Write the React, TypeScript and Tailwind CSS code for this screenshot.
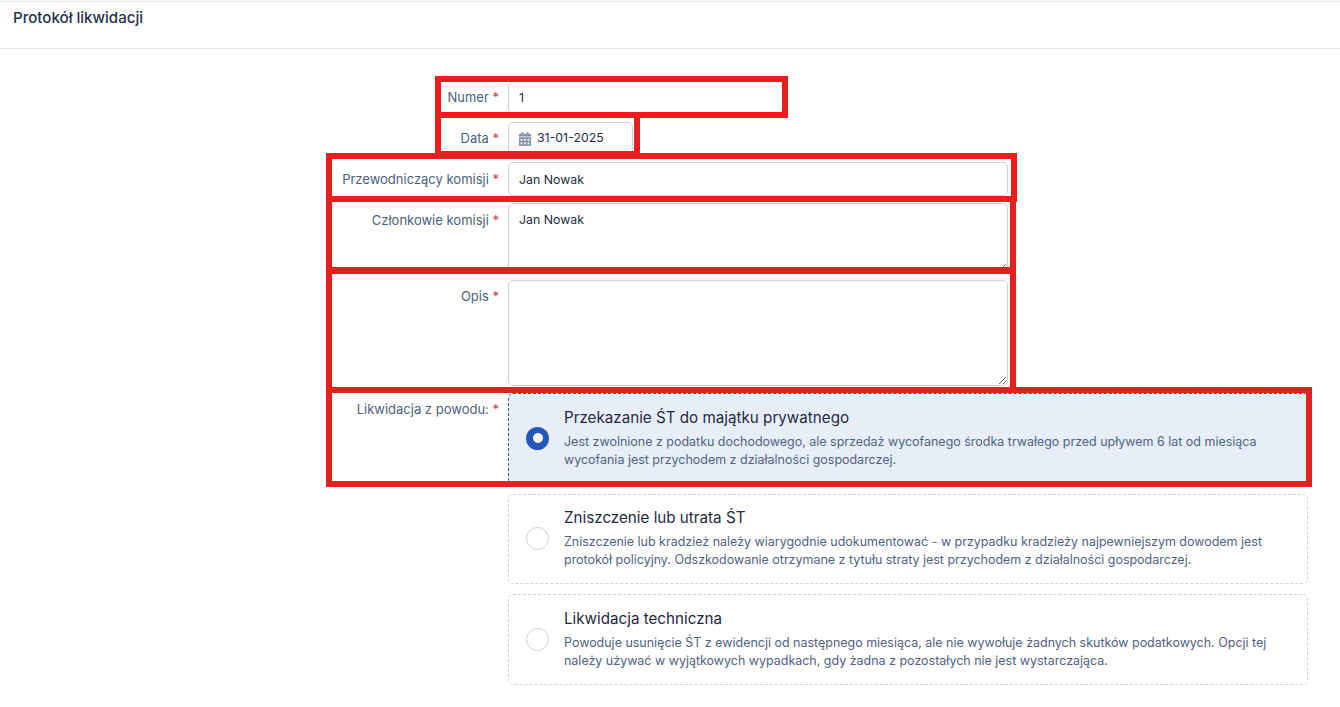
import React from "react";
import { FaCalendarAlt } from "react-icons/fa";

const options = [
  {
    title: "Przekazanie ŚT do majątku prywatnego",
    body: "Jest zwolnione z podatku dochodowego, ale sprzedaż wycofanego środka trwałego przed upływem 6 lat od miesiąca wycofania jest przychodem z działalności gospodarczej.",
    active: true,
  },
  {
    title: "Zniszczenie lub utrata ŚT",
    body: "Zniszczenie lub kradzież należy wiarygodnie udokumentować - w przypadku kradzieży najpewniejszym dowodem jest protokół policyjny. Odszkodowanie otrzymane z tytułu straty jest przychodem z działalności gospodarczej.",
    active: false,
  },
  {
    title: "Likwidacja techniczna",
    body: "Powoduje usunięcie ŚT z ewidencji od następnego miesiąca, ale nie wywołuje żadnych skutków podatkowych. Opcji tej należy używać w wyjątkowych wypadkach, gdy żadna z pozostałych nie jest wystarczająca.",
    active: false,
  },
];

// red annotation frames drawn over the screenshot
const marks = [
  "left-[435px] top-[76px] w-[353px] h-[42px]",
  "left-[435px] top-[112px] w-[205px] h-[45px]",
  "left-[326px] top-[153px] w-[691px] h-[49px]",
  "left-[326px] top-[196px] w-[690px] h-[78px]",
  "left-[326px] top-[267px] w-[690px] h-[126px]",
  "left-[326px] top-[387px] w-[986px] h-[100px]",
];

const Label: React.FC<{ text: string; className?: string }> = ({ text, className }) => (
  <label className={`w-[508px] shrink-0 pr-[9px] text-right text-[13px] leading-[20px] text-[#4a5f7d] ${className ?? ""}`}>
    {text} <span className="text-[#c9403f]">*</span>
  </label>
);

const inputCls =
  "rounded-[5px] border border-[#c8d2de] bg-white px-[10px] text-[12.35px] text-[#1c2b4a] outline-none";

export default function App() {
  return (
    <div className="relative h-[707px] w-[1340px] overflow-hidden bg-white font-['Inter',sans-serif]">
      <header className="mt-px h-[48px] border-y border-[#e6e9f0] pl-[13px] pt-[6px] text-[15.1px] font-medium leading-[20px] text-[#25324b]">
        Protokół likwidacji
      </header>

      <main className="flex flex-col pt-[32px]">
        <div className="mb-[8px] flex items-start">
          <Label text="Numer" className="pt-[6px]" />
          <input readOnly value="1" className={`${inputCls} h-[33px] w-[275px]`} />
        </div>
        <div className="mb-[7px] flex items-start">
          <Label text="Data" className="pt-[6px]" />
          <div className={`${inputCls} flex h-[33px] w-[125px] items-center gap-[5px]`}>
            <FaCalendarAlt className="-ml-px size-[14px] shrink-0 text-[#8996a8]" />
            <span>31-01-2025</span>
          </div>
        </div>
        <div className="mb-[7px] flex items-start">
          <Label text="Przewodniczący komisji" className="pt-[7px] text-[#2f6a8f]" />
          <input readOnly value="Jan Nowak" className={`${inputCls} h-[34px] w-[500px]`} />
        </div>
        <div className="mb-[7px] flex items-start">
          <Label text="Członkowie komisji" className="pt-[7px]" />
          <textarea
            readOnly
            value="Jan Nowak"
            className={`${inputCls} h-[70px] w-[500px] resize-y py-[6px] leading-[20px]`}
          />
        </div>
        <div className="mb-[7px] flex items-start">
          <Label text="Opis" className="pt-[6px]" />
          <textarea readOnly value="" className={`${inputCls} h-[106px] w-[500px] resize-y`} />
        </div>
        <div className="flex items-start">
          <Label text="Likwidacja z powodu:" className="pt-[6px]" />
          <div className="flex w-[800px] flex-col gap-[10px]">
            {options.map((o) => (
              <div
                key={o.title}
                className={`flex h-[90.5px] items-center gap-[15px] rounded-[5px] border border-dashed pl-[17px] pr-[16px] ${
                  o.active ? "border-[#2557b8] bg-[#e8eef8]" : "border-[#cdd3da] bg-white"
                }`}
              >
                {o.active ? (
                  <span className="flex size-[23px] shrink-0 items-center justify-center rounded-full bg-[#2557b8]">
                    <span className="size-[10px] rounded-full bg-white" />
                  </span>
                ) : (
                  <span className="size-[23px] shrink-0 rounded-full border border-[#c8d2de] bg-white" />
                )}
                <div>
                  <div className="mb-[5px] text-[15.2px] leading-[20px] text-[#1f2a44]">{o.title}</div>
                  <p className="text-[12.48px] leading-[18px] text-[#4f6283]">{o.body}</p>
                </div>
              </div>
            ))}
          </div>
        </div>
      </main>

      {marks.map((m) => (
        <div key={m} className={`pointer-events-none absolute border-[6px] border-[#e81f1f] ${m}`} />
      ))}
    </div>
  );
}
